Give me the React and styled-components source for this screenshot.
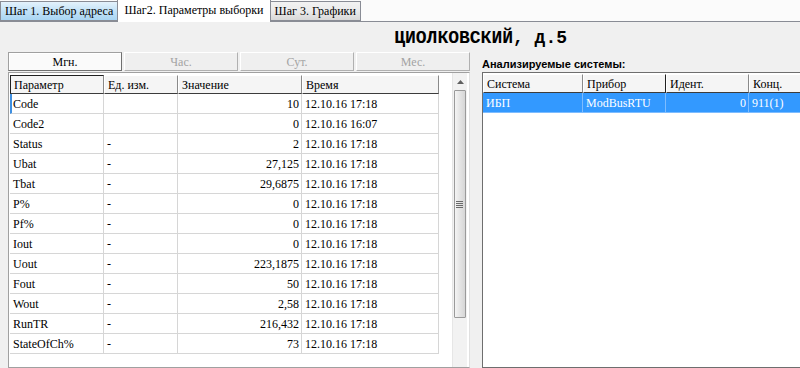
import styled, { createGlobalStyle } from "styled-components"

const GlobalStyle = createGlobalStyle`
  html, body {
    margin: 0;
    padding: 0;
    background: #f0f0f0;
    overflow: hidden;
  }
  #root {
    width: 800px;
    height: 368px;
    overflow: hidden;
  }
`

const tabs = [
  { label: "Шаг 1. Выбор адреса", kind: "blue" },
  { label: "Шаг2. Параметры выборки", kind: "active" },
  { label: "Шаг 3. Графики", kind: "gray" },
]

const periods = [
  { label: "Мгн.", active: true },
  { label: "Час." },
  { label: "Сут." },
  { label: "Мес." },
]

const params = [
  ["Code", "", "10", "12.10.16 17:18"],
  ["Code2", "", "0", "12.10.16 16:07"],
  ["Status", "-", "2", "12.10.16 17:18"],
  ["Ubat", "-", "27,125", "12.10.16 17:18"],
  ["Tbat", "-", "29,6875", "12.10.16 17:18"],
  ["P%", "-", "0", "12.10.16 17:18"],
  ["Pf%", "-", "0", "12.10.16 17:18"],
  ["Iout", "-", "0", "12.10.16 17:18"],
  ["Uout", "-", "223,1875", "12.10.16 17:18"],
  ["Fout", "-", "50", "12.10.16 17:18"],
  ["Wout", "-", "2,58", "12.10.16 17:18"],
  ["RunTR", "-", "216,432", "12.10.16 17:18"],
  ["StateOfCh%", "-", "73", "12.10.16 17:18"],
]

const App = () => {
  return (
    <Window>
      <GlobalStyle />
      <TabBar>
        {tabs.map((t) => (
          <Tab key={t.label} $kind={t.kind}>{t.label}</Tab>
        ))}
      </TabBar>

      <Page>
        <TitleRow>
          <Title>ЦИОЛКОВСКИЙ, д.5</Title>
        </TitleRow>

        <Columns>
          <LeftPanel>
            <PeriodBar>
              {periods.map((p) => (
                <PeriodButton key={p.label} $active={p.active}>{p.label}</PeriodButton>
              ))}
            </PeriodBar>

            <Grid>
              <GridBody>
                <ParamHeader>
                  <HeadCell $focus>Параметр</HeadCell>
                  <HeadCell>Ед. изм.</HeadCell>
                  <HeadCell>Значение</HeadCell>
                  <HeadCell>Время</HeadCell>
                </ParamHeader>
                {params.map((r, i) => (
                  <ParamRow key={r[0]}>
                    <Cell $current={i === 0}>{r[0]}</Cell>
                    <Cell>{r[1]}</Cell>
                    <Cell $right>{r[2]}</Cell>
                    <Cell>{r[3]}</Cell>
                  </ParamRow>
                ))}
              </GridBody>
              <ScrollBar>
                <ScrollArrow>
                  <svg width="7" height="4" viewBox="0 0 7 4">
                    <path d="M0 4 L3.5 0 L7 4 Z" fill="#606060" />
                  </svg>
                </ScrollArrow>
                <Thumb>
                  <Grip>
                    <i /><i /><i /><i />
                  </Grip>
                </Thumb>
              </ScrollBar>
            </Grid>
          </LeftPanel>

          <RightPanel>
            <PanelLabel>Анализируемые системы:</PanelLabel>
            <SysGrid>
              <SysHeader>
                <HeadCell>Система</HeadCell>
                <HeadCell $dark>Прибор</HeadCell>
                <HeadCell>Идент.</HeadCell>
                <HeadCell>Конц.</HeadCell>
              </SysHeader>
              <SysRow $selected>
                <Cell>ИБП</Cell>
                <Cell>ModBusRTU</Cell>
                <Cell $right>0</Cell>
                <Cell>911(1)</Cell>
              </SysRow>
            </SysGrid>
          </RightPanel>
        </Columns>
      </Page>
    </Window>
  )
}

const serif = `"Liberation Serif", "Noto Serif", "Times New Roman", serif`

const Window = styled.div`
  width: 800px;
  height: 368px;
  display: flex;
  flex-direction: column;
  background: #f0f0f0;
  font-family: ${serif};
  font-size: 12px;
  color: #000;
`

const TabBar = styled.div`
  display: flex;
  align-items: flex-end;
  height: 22px;
  background: #fbfbfb;
  border-bottom: 1px solid #898c95;
  box-sizing: border-box;
`

const Tab = styled.div`
  box-sizing: border-box;
  height: ${({ $kind }) => ($kind === "active" ? "23px" : "20px")};
  margin-bottom: ${({ $kind }) => ($kind === "active" ? "-1px" : "0")};
  padding: ${({ $kind }) => ($kind === "active" ? "3px 6px 0" : "0 4px")};
  display: flex;
  align-items: ${({ $kind }) => ($kind === "active" ? "flex-start" : "center")};
  border: 1px solid #898c95;
  border-bottom: ${({ $kind }) => ($kind === "active" ? "none" : "1px solid #898c95")};
  margin-left: ${({ $kind }) => ($kind === "active" ? "-1px" : "0")};
  margin-right: ${({ $kind }) => ($kind === "active" ? "-1px" : "0")};
  z-index: ${({ $kind }) => ($kind === "active" ? 1 : 0)};
  white-space: nowrap;
  background: ${({ $kind }) =>
    $kind === "active"
      ? "#ffffff"
      : $kind === "blue"
      ? "linear-gradient(#e4f2fc, #c2e2f7 50%, #a9d5f3)"
      : "linear-gradient(#f2f2f2, #ebebeb 50%, #d8d8d8)"};
`

const Page = styled.div`
  flex: 1;
  display: flex;
  flex-direction: column;
  min-height: 0;
`

const TitleRow = styled.div`
  display: flex;
  justify-content: flex-end;
  padding: 6px 233px 0 0;
  height: 24px;
  box-sizing: border-box;
`

const Title = styled.div`
  font-family: "Liberation Mono", "DejaVu Sans Mono", "Courier New", monospace;
  font-weight: bold;
  font-size: 18px;
  line-height: 20px;
`

const Columns = styled.div`
  flex: 1;
  display: flex;
  gap: 12px;
  padding-left: 8px;
  padding-top: 6px;
  min-height: 0;
`

const LeftPanel = styled.div`
  width: 462px;
  display: flex;
  flex-direction: column;
`

const PeriodBar = styled.div`
  display: grid;
  grid-template-columns: repeat(4, 1fr);
  gap: 2px;
  height: 18px;
  margin-bottom: 2px;
`

const PeriodButton = styled.div`
  box-sizing: border-box;
  display: flex;
  align-items: center;
  justify-content: center;
  padding-top: 2px;
  color: ${({ $active }) => ($active ? "#000" : "#a3a3a3")};
  background: ${({ $active }) => ($active ? "#fafafa" : "#efefef")};
  border: 1px solid;
  border-color: ${({ $active }) =>
    $active ? "#a0a0a0 #707070 #707070 #a0a0a0" : "#ffffff #b0b0b0 #b0b0b0 #ffffff"};
  box-shadow: ${({ $active }) => ($active ? "inset 1px 1px 0 #ffffff" : "none")};
`

const Grid = styled.div`
  flex: 1;
  display: flex;
  background: #fff;
  border: 1px solid #a0a0a0;
  border-right-color: #e0e0e0;
  box-sizing: border-box;
  padding: 2px 0 0 1px;
  min-height: 0;
`

const GridBody = styled.div`
  flex: 1;
`

const paramCols = "94px 74px 124px 137px"

const ParamHeader = styled.div`
  display: grid;
  grid-template-columns: ${paramCols};
  height: 19px;
`

const ParamRow = styled.div`
  display: grid;
  grid-template-columns: ${paramCols};
  height: 20px;
`

const HeadCell = styled.div`
  box-sizing: border-box;
  padding: 2px 3px 0;
  background: #f5f5f5;
  border-right: 1px solid ${({ $dark }) => ($dark ? "#202020" : "#8a8a8a")};
  border-bottom: 1px solid #3c3c3c;
  border-top: 1px solid ${({ $focus }) => ($focus ? "#202020" : "#ffffff")};
  border-left: 1px solid ${({ $focus }) => ($focus ? "#202020" : "#ffffff")};
  white-space: nowrap;
  overflow: hidden;
`

const Cell = styled.div`
  box-sizing: border-box;
  padding: 3px 2px 0 3px;
  border-right: 1px solid #d6d6d6;
  border-bottom: 1px solid #d6d6d6;
  border-left: ${({ $current }) => ($current ? "2px solid #3f8fe0" : "none")};
  padding-left: ${({ $current }) => ($current ? "1px" : "3px")};
  text-align: ${({ $right }) => ($right ? "right" : "left")};
  white-space: nowrap;
  overflow: hidden;
`

const ScrollBar = styled.div`
  width: 16px;
  margin-right: 2px;
  margin-left: 13px;
  display: flex;
  flex-direction: column;
  background: #f2f2f2;
  border-left: 1px solid #e6e6e6;
  margin-top: -2px;
`

const ScrollArrow = styled.div`
  height: 17px;
  display: flex;
  align-items: center;
  justify-content: center;
`

const Thumb = styled.div`
  height: 228px;
  margin: 0 1px;
  box-sizing: border-box;
  border: 1px solid #9a9a9a;
  border-radius: 1px;
  background: linear-gradient(90deg, #f4f4f4, #e4e4e4 50%, #d6d6d6);
  display: flex;
  align-items: center;
  justify-content: center;
`

const Grip = styled.div`
  display: flex;
  flex-direction: column;
  gap: 1px;
  margin-left: -2px;
  i {
    display: block;
    width: 7px;
    height: 1px;
    background: #6a6a6a;
  }
`

const RightPanel = styled.div`
  flex: 1;
  display: flex;
  flex-direction: column;
  min-width: 0;
`

const PanelLabel = styled.div`
  font-family: "Liberation Sans", "DejaVu Sans", Arial, sans-serif;
  font-weight: bold;
  font-size: 11px;
  height: 20px;
  padding-top: 6px;
  box-sizing: border-box;
`

const SysGrid = styled.div`
  flex: 1;
  background: #fff;
  border: 1px solid #6e6e6e;
  border-right: none;
  padding-top: 1px;
`

const sysCols = "100px 83px 83px 80px"

const SysHeader = styled.div`
  display: grid;
  grid-template-columns: ${sysCols};
  height: 19px;
`

const SysRow = styled.div`
  display: grid;
  grid-template-columns: ${sysCols};
  height: 20px;
  background: ${({ $selected }) => ($selected ? "#3399ff" : "#fff")};
  color: ${({ $selected }) => ($selected ? "#fff" : "#000")};
  & > div {
    border-color: ${({ $selected }) => ($selected ? "#7dbcff" : "#d6d6d6")};
  }
`

export default App
